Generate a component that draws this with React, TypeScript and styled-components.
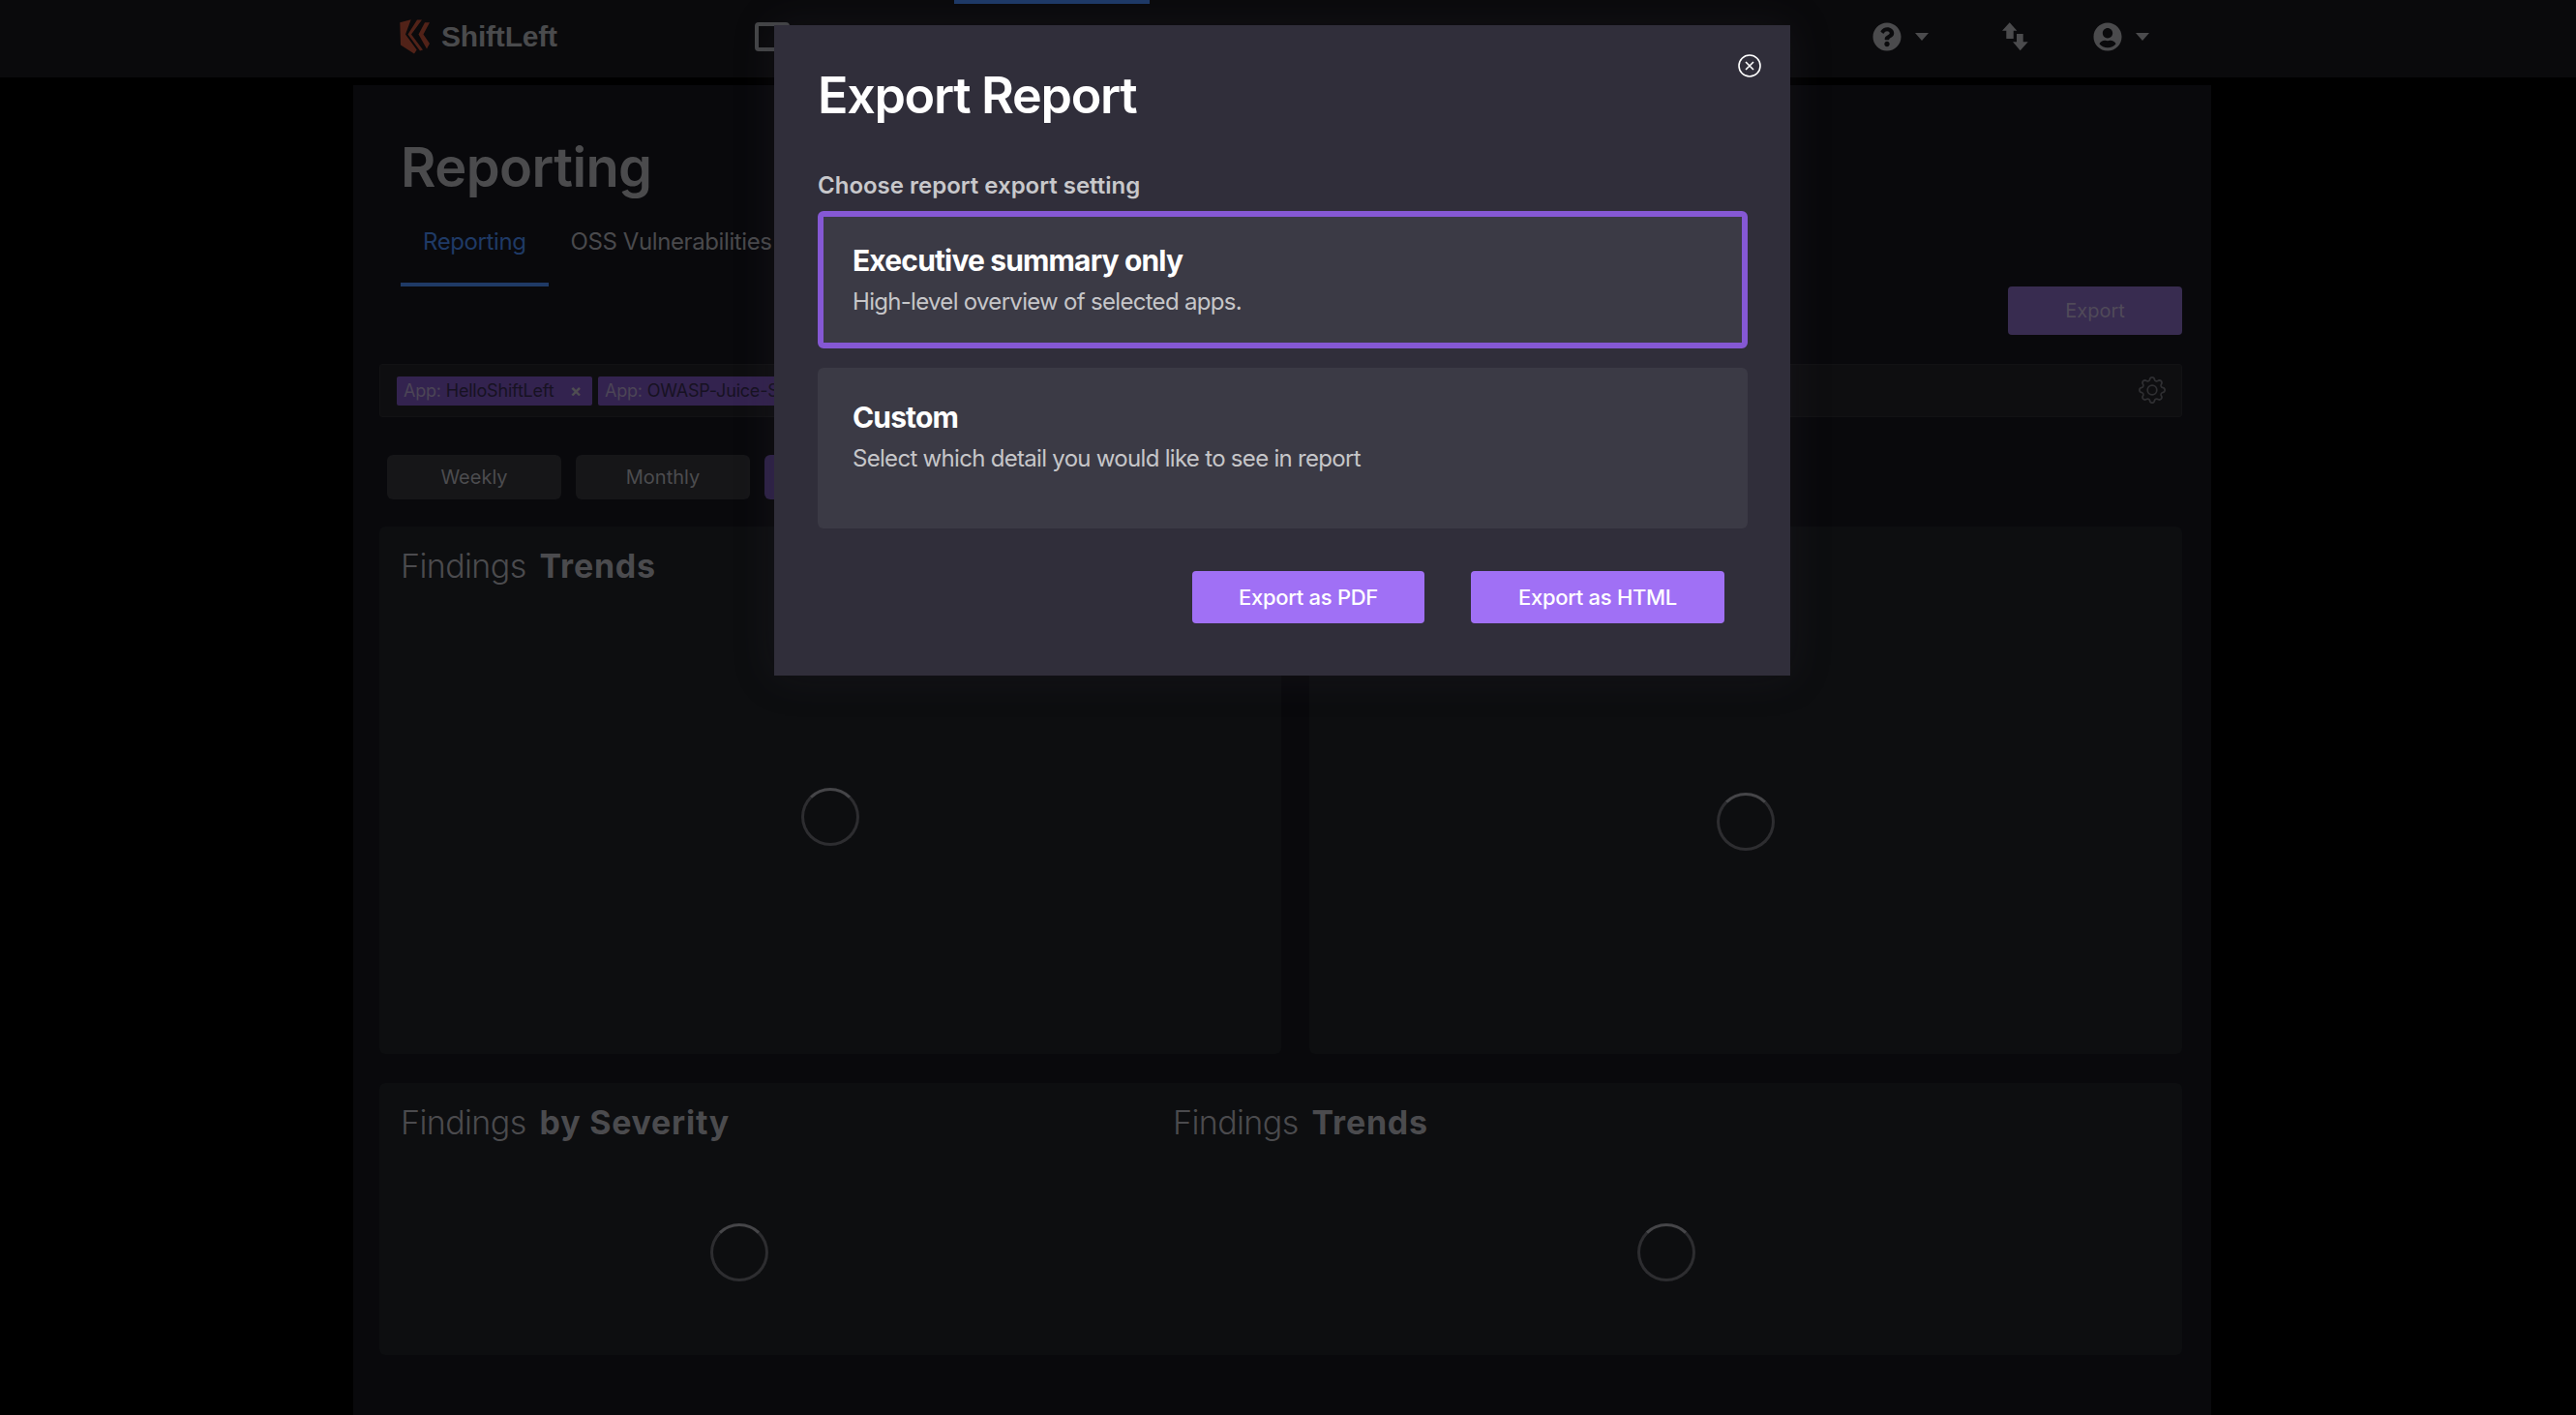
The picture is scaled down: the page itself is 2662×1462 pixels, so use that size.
import React from 'react';
import styled, { createGlobalStyle } from 'styled-components';
import { FaQuestionCircle, FaUserCircle } from 'react-icons/fa';
import { BsGear } from 'react-icons/bs';

const Global = createGlobalStyle`
  html, body { margin: 0; padding: 0; background: #000; height: 100%; overflow: hidden; }
  body { font-family: Inter, "Noto Sans", sans-serif; }
  #root { height: 100%; }
  * { box-sizing: border-box; }
`;

const Page = styled.div`
  position: relative;
  width: 2662px;
  height: 1462px;
  padding-right: 12px;
  overflow: hidden;
  background: #000;
`;

const NavBar = styled.header`
  height: 80px;
  background: #0a0a0c;
  margin-right: -12px;
  padding-right: 12px;
`;

const NavInner = styled.div`
  width: 1920px;
  height: 100%;
  margin: 0 auto;
  padding: 0 64px 4px 48px;
  display: flex;
  align-items: center;
`;

const Brand = styled.div`
  display: flex;
  align-items: center;
  gap: 11px;
  width: 367px;
`;

const BrandName = styled.span`
  font-family: "Liberation Sans", Arial, sans-serif;
  font-weight: 700;
  font-size: 30px;
  letter-spacing: -0.2px;
  color: #4a4b4d;
`;

const NavBox = styled.div`
  width: 36px;
  height: 30px;
  border: 4px solid #454648;
  border-radius: 4px;
`;

const ActiveNav = styled.div`
  align-self: flex-start;
  width: 202px;
  height: 80px;
  margin-left: 170px;
  border-top: 4px solid #1e3a68;
`;

const NavActions = styled.div`
  margin-left: auto;
  display: flex;
  align-items: center;
  color: #4b4b4d;
`;

const Action = styled.div<{ $gap: number }>`
  display: flex;
  align-items: center;
  margin-left: ${p => p.$gap}px;
`;

const Caret = styled.span`
  width: 0;
  height: 0;
  margin-left: 14px;
  border-left: 7px solid transparent;
  border-right: 7px solid transparent;
  border-top: 8px solid #4b4b4d;
`;

const Panel = styled.main`
  width: 1920px;
  height: 1374px;
  margin: 8px auto 0;
  padding: 51px 30px 0 27px;
  background: #09090c;
`;

const TitleBlock = styled.div`
  padding-left: 22px;
`;

const PageTitle = styled.h1`
  margin: 0;
  font-size: 56px;
  line-height: 68px;
  font-weight: 600;
  letter-spacing: -0.6px;
  color: #4b4b4d;
`;

const Tabs = styled.nav`
  display: flex;
`;

const Tab = styled.div<{ $active?: boolean }>`
  padding: 28px 23px 27px;
  font-size: 24px;
  line-height: 30px;
  letter-spacing: -0.4px;
  color: ${p => (p.$active ? '#1f3a66' : '#4a4a4d')};
  border-bottom: 4px solid ${p => (p.$active ? '#1f3a66' : 'transparent')};
`;

const ExportRow = styled.div`
  display: flex;
  justify-content: flex-end;
  height: 50px;
`;

const ExportButton = styled.div`
  width: 180px;
  height: 50px;
  display: flex;
  align-items: center;
  justify-content: center;
  border-radius: 4px;
  background: #382c50;
  color: #504a59;
  font-size: 20px;
`;

const FilterBar = styled.div`
  height: 55px;
  margin-top: 30px;
  padding: 0 17px;
  display: flex;
  align-items: center;
  gap: 6px;
  background: #0e0e10;
  border: 1px solid #121214;
  border-radius: 3px;
  color: #2f2f32;
`;

const Tag = styled.div`
  height: 30px;
  width: 202px;
  padding: 0 11px 0 7px;
  display: flex;
  align-items: center;
  justify-content: space-between;
  background: #33234f;
  border-radius: 2px;
  font-size: 18px;
  letter-spacing: -0.2px;
  color: #171222;
  white-space: nowrap;
`;

const TagKey = styled.span`
  color: #4c4556;
`;

const TagClose = styled.span`
  color: #4f4d52;
  font-weight: 700;
  font-size: 18px;
`;

const GearSlot = styled.div`
  margin: -2px -1px 0 auto;
  display: flex;
`;

const RangeRow = styled.div`
  margin-top: 39px;
  padding-left: 8px;
  display: flex;
  gap: 15px;
`;

const RangeButton = styled.div<{ $active?: boolean }>`
  width: 180px;
  height: 46px;
  display: flex;
  align-items: center;
  justify-content: center;
  border-radius: 6px;
  background: ${p => (p.$active ? '#2e2248' : '#161618')};
  color: #4c4c4f;
  font-size: 20px;
`;

const CardGrid = styled.div`
  margin-top: 28px;
  display: grid;
  grid-template-columns: 932px 902px;
  grid-template-rows: 545px 281px;
  column-gap: 29px;
  row-gap: 30px;
`;

const Card = styled.section<{ $wide?: boolean }>`
  ${p => (p.$wide ? 'grid-column: 1 / 3; display: grid; grid-template-columns: 798px 1065px;' : 'display: flex; flex-direction: column;')}
  background: #0d0e10;
  border-radius: 6px;
`;

const CardColumn = styled.div`
  display: flex;
  flex-direction: column;
`;

const CardHeader = styled.div<{ $height: number }>`
  height: ${p => p.$height}px;
  padding: 20px 0 0 22px;
`;

const Heading = styled.h2`
  margin: 0;
  font-size: 34px;
  line-height: 42px;
  font-weight: 300;
  letter-spacing: -0.6px;
  color: #4b4b4e;
`;

const HeadingStrong = styled.strong`
  margin-left: 14px;
  font-weight: 700;
  letter-spacing: 0.75px;
`;

const SpinnerArea = styled.div<{ $shift?: number }>`
  flex: 1;
  display: flex;
  align-items: center;
  justify-content: center;
  padding-right: ${p => p.$shift ?? 0}px;
`;

const Spinner = styled.div`
  width: 60px;
  height: 60px;
  border-radius: 50%;
  border: 3px solid #2d2d30;
  border-top-color: #454548;
`;

const Backdrop = styled.div`
  position: absolute;
  inset: 0 12px 0 0;
  display: flex;
  justify-content: center;
  align-items: flex-start;
  padding-top: 26px;
`;

const Modal = styled.div`
  position: relative;
  width: 1050px;
  height: 672px;
  padding: 42px 44px 0 45px;
  background: #302e3a;
  box-shadow: 0 0 40px rgba(48, 46, 58, 0.22);
`;

const CloseButton = styled.div`
  position: absolute;
  top: 30px;
  right: 30px;
  display: flex;
  color: #fff;
`;

const ModalTitle = styled.h2`
  margin: 0;
  font-size: 52px;
  line-height: 62px;
  font-weight: 600;
  letter-spacing: -1.3px;
  color: #fff;
`;

const ModalLabel = styled.div`
  margin-top: 47px;
  font-size: 24px;
  line-height: 30px;
  font-weight: 600;
  color: #c8c8cb;
`;

const Option = styled.div<{ $selected?: boolean; $height: number }>`
  height: ${p => p.$height}px;
  padding: ${p => (p.$selected ? '27px 30px' : '33px 36px')};
  border: ${p => (p.$selected ? '6px solid #8558d4' : 'none')};
  border-radius: 6px;
  background: #3b3a45;
  margin-bottom: 20px;
`;

const OptionTitle = styled.div`
  font-size: 30px;
  line-height: 36px;
  font-weight: 700;
  letter-spacing: -0.85px;
  color: #fff;
`;

const OptionText = styled.div`
  margin-top: 7px;
  font-size: 24px;
  line-height: 36px;
  letter-spacing: -0.7px;
  color: #c6c6c9;
`;

const OptionGroup = styled.div`
  margin-top: 11px;
`;

const ModalActions = styled.div`
  margin-top: 44px;
  padding-right: 24px;
  display: flex;
  justify-content: flex-end;
  gap: 48px;
`;

const PrimaryButton = styled.div<{ $width: number }>`
  width: ${p => p.$width}px;
  height: 54px;
  display: flex;
  align-items: center;
  justify-content: center;
  border-radius: 4px;
  background: #a070f5;
  color: #fff;
  font-size: 22px;
  font-weight: 500;
  letter-spacing: -0.3px;
`;

const Logo = () => (
  <svg width="32" height="36" viewBox="9 8.5 32 36" fill="#512218">
    <polygon points="9.3,11.7 20.7,8.7 15,24 26.7,40 24,44 10,35" />
    <polygon points="27,9 32,9 21,24 33,40 30,41 17.5,24" />
    <polygon points="35,11.7 40,11.7 33.5,24 40,33.5 37,39 28.5,24" />
  </svg>
);

const SwapIcon = () => (
  <svg width="28" height="30" viewBox="0 0 28 30" fill="#4b4b4d">
    <path d="M8.7 0.3 L16.3 8.7 H12.7 V17 H5.3 V8.7 H1 Z" />
    <path d="M16 12 H22.7 V20.3 H27.7 L19.7 29.3 L12 20.3 H16 Z" />
  </svg>
);

const CloseIcon = () => (
  <svg width="24" height="24" viewBox="0 0 24 24" fill="none" stroke="currentColor" strokeWidth="1.6">
    <circle cx="12" cy="12" r="11" />
    <path d="M8 8 L16 16 M16 8 L8 16" />
  </svg>
);

export default function App() {
  return (
    <Page>
      <Global />
      <NavBar>
        <NavInner>
          <Brand>
            <Logo />
            <BrandName>ShiftLeft</BrandName>
          </Brand>
          <NavBox />
          <ActiveNav />
          <NavActions>
            <Action $gap={0}>
              <FaQuestionCircle size={30} />
              <Caret />
            </Action>
            <Action $gap={75}>
              <SwapIcon />
            </Action>
            <Action $gap={67}>
              <FaUserCircle size={30} />
              <Caret />
            </Action>
          </NavActions>
        </NavInner>
      </NavBar>
      <Panel>
        <TitleBlock>
          <PageTitle>Reporting</PageTitle>
          <Tabs>
            <Tab $active>Reporting</Tab>
            <Tab>OSS Vulnerabilities</Tab>
          </Tabs>
        </TitleBlock>
        <ExportRow>
          <ExportButton>Export</ExportButton>
        </ExportRow>
        <FilterBar>
          <Tag>
            <span><TagKey>App: </TagKey>HelloShiftLeft</span>
            <TagClose>×</TagClose>
          </Tag>
          <Tag>
            <span><TagKey>App: </TagKey>OWASP-Juice-Shop</span>
          </Tag>
          <GearSlot>
            <BsGear size={28} />
          </GearSlot>
        </FilterBar>
        <RangeRow>
          <RangeButton>Weekly</RangeButton>
          <RangeButton>Monthly</RangeButton>
          <RangeButton $active />
        </RangeRow>
        <CardGrid>
          <Card>
            <CardHeader $height={55}>
              <Heading>Findings<HeadingStrong>Trends</HeadingStrong></Heading>
            </CardHeader>
            <SpinnerArea><Spinner /></SpinnerArea>
          </Card>
          <Card>
            <CardHeader $height={65} />
            <SpinnerArea><Spinner /></SpinnerArea>
          </Card>
          <Card $wide>
            <CardColumn>
              <CardHeader $height={69}>
                <Heading>Findings<HeadingStrong>by Severity</HeadingStrong></Heading>
              </CardHeader>
              <SpinnerArea $shift={54}><Spinner /></SpinnerArea>
            </CardColumn>
            <CardColumn>
              <CardHeader $height={69}>
                <Heading>Findings<HeadingStrong>Trends</HeadingStrong></Heading>
              </CardHeader>
              <SpinnerArea $shift={2}><Spinner /></SpinnerArea>
            </CardColumn>
          </Card>
        </CardGrid>
      </Panel>
      <Backdrop>
        <Modal>
          <CloseButton><CloseIcon /></CloseButton>
          <ModalTitle>Export Report</ModalTitle>
          <ModalLabel>Choose report export setting</ModalLabel>
          <OptionGroup>
            <Option $selected $height={142}>
              <OptionTitle>Executive summary only</OptionTitle>
              <OptionText>High-level overview of selected apps.</OptionText>
            </Option>
            <Option $height={166}>
              <OptionTitle>Custom</OptionTitle>
              <OptionText>Select which detail you would like to see in report</OptionText>
            </Option>
          </OptionGroup>
          <ModalActions>
            <PrimaryButton $width={240}>Export as PDF</PrimaryButton>
            <PrimaryButton $width={262}>Export as HTML</PrimaryButton>
          </ModalActions>
        </Modal>
      </Backdrop>
    </Page>
  );
}
